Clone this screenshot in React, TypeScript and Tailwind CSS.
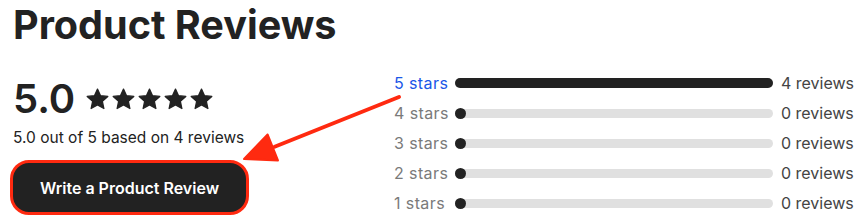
import React from "react";

const Star = () => (
  <svg width="25" height="25" viewBox="0 0 24 24" className="block">
    <path
      fill="#222222"
      stroke="#222222"
      strokeWidth="1.2"
      strokeLinejoin="round"
      d="M12 2l2.95 6.35 6.95.75-5.2 4.7 1.45 6.85L12 17.15l-6.15 3.5 1.45-6.85-5.2-4.7 6.95-.75z"
    />
  </svg>
);

const rows = [
  { label: "5 stars", count: 4, pct: 100, active: true },
  { label: "4 stars", count: 0, pct: 0 },
  { label: "3 stars", count: 0, pct: 0 },
  { label: "2 stars", count: 0, pct: 0 },
  { label: "1 stars", count: 0, pct: 0 },
];

export default function App() {
  const tip = { x: 244, y: 159 };
  const tail = { x: 399, y: 97 };
  const dx = tail.x - tip.x;
  const dy = tail.y - tip.y;
  const len = Math.hypot(dx, dy);
  const ux = dx / len;
  const uy = dy / len;
  const hl = 31;
  const hw = 14;
  const bx = tip.x + ux * hl;
  const by = tip.y + uy * hl;
  const px = -uy;
  const py = ux;
  const head = `${tip.x},${tip.y} ${bx + px * hw},${by + py * hw} ${bx - px * hw},${by - py * hw}`;

  return (
    <div
      className="relative w-[863px] h-[224px] bg-white overflow-hidden text-[#222222]"
      style={{ fontFamily: "Inter, 'Noto Sans', sans-serif" }}
    >
      <div className="pl-[13px] pr-[12px] pt-[5px]">
        <h1 className="text-[39.6px] leading-[40px] font-bold">Product Reviews</h1>
        <div className="flex mt-[29px]">
          <div className="flex flex-col w-[260px]">
            <div className="flex items-center gap-[10px] h-[50px]">
              <span className="text-[40px] font-semibold leading-none">5.0</span>
              <div className="flex gap-[1px]">
                <Star />
                <Star />
                <Star />
                <Star />
                <Star />
              </div>
            </div>
            <p className="text-[15.5px] leading-[20px] mt-[4px] text-[#222222]">
              5.0 out of 5 based on 4 reviews
            </p>
            <div className="mt-[12px] -ml-[3px] w-[239px] h-[55px] rounded-[19px] border-[3px] border-[#ff2a10] bg-[#222222] flex items-center justify-center">
              <span className="text-white text-[16px] font-semibold">Write a Product Review</span>
            </div>
          </div>
          <div className="ml-auto w-[457px] flex flex-col -mt-[6px]">
            {rows.map((r) => (
              <div key={r.label} className="flex items-center h-[30px]">
                <span
                  className={
                    "w-[61px] shrink-0 whitespace-nowrap text-[16px] tracking-[0.4px] " +
                    (r.active ? "text-[#1a57e8]" : "text-[#7a7a7a]")
                  }
                >
                  {r.label}
                </span>
                <div className="flex-1 relative h-[9px] rounded-full bg-[#e0e0e0]">
                  {r.pct > 0 ? (
                    <div
                      className="absolute left-0 top-[-0.5px] h-[10px] rounded-full bg-[#222222]"
                      style={{ width: `${r.pct}%` }}
                    />
                  ) : (
                    <div className="absolute left-0 top-[-1px] w-[11px] h-[11px] rounded-full bg-[#222222]" />
                  )}
                </div>
                <span className="w-[78px] shrink-0 whitespace-nowrap pl-[8px] text-[16px] text-[#444444]">
                  {r.count} reviews
                </span>
              </div>
            ))}
          </div>
        </div>
      </div>
      <svg className="absolute left-0 top-0 pointer-events-none" width="863" height="224">
        <line
          x1={tail.x}
          y1={tail.y}
          x2={bx + ux * 2}
          y2={by + uy * 2}
          stroke="#ff2a10"
          strokeWidth="4"
          strokeLinecap="round"
        />
        <polygon points={head} fill="#ff2a10" stroke="#ff2a10" strokeWidth="2" strokeLinejoin="round" />
      </svg>
    </div>
  );
}
